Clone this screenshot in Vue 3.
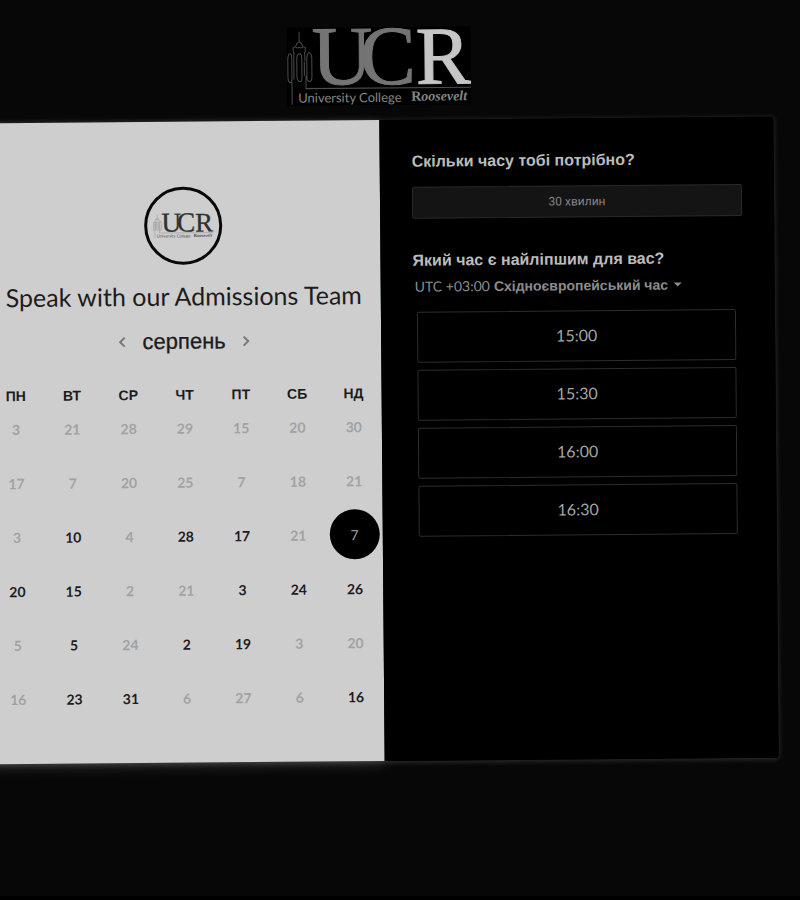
<script setup>
import { ref } from 'vue'

const weekdays = ['ПН', 'ВТ', 'СР', 'ЧТ', 'ПТ', 'СБ', 'НД']

const off = (n) => ({ n, open: false })
const on = (n) => ({ n, open: true })

const weeks = [
  [off(3), off(21), off(28), off(29), off(15), off(20), off(30)],
  [off(17), off(7), off(20), off(25), off(7), off(18), off(21)],
  [off(3), on(10), off(4), on(28), on(17), off(21), on(7)],
  [on(20), on(15), off(2), off(21), on(3), on(24), on(26)],
  [off(5), on(5), off(24), on(2), on(19), off(3), off(20)],
  [off(16), on(23), on(31), off(6), off(27), off(6), on(16)],
]

const slots = ['15:00', '15:30', '16:00', '16:30']
const selected = ref('2-6')
</script>

<template>
  <div class="page">
    <div class="sheet">
      <header class="header">
        <svg class="logo" viewBox="0 0 184 78" role="img" aria-label="University College Roosevelt">
          <symbol id="ucr" class="mark" viewBox="0 0 184 78">
            <g class="tower">
              <path d="M5 77V54M1 50V31Q1.500 26 3 26Q5 26 5 31V51Q5 55 3 55Q1 54 1 50ZM10 48V30Q10.500 26 12.500 26Q15 26 15 31V50Q15 54 12.500 54Q10 53 10 48ZM20 50V31Q20.500 25 22.500 25Q25 26 25 31V49Q25 54 22.500 54Q20 54 20 50ZM7 52V32M7 32V27Q8 25 6.500 24V20L9 19L10 16L12.500 14V4M12.500 14L15 16L16 19L18.500 20V24Q17 25 18 27V33M17.500 34V48M19 48V61H184M9 20H16" />
            </g>
            <text class="uc" x="25" y="57">U</text>
            <text class="uc" x="73" y="57">C</text>
            <text class="r" x="129" y="57">R</text>
            <text class="small" x="11" y="75">University College</text>
            <text class="name" x="124" y="74">R<tspan class="slant">oosevelt</tspan></text>
          </symbol>
          <use href="#ucr" width="184" height="78" />
        </svg>
      </header>

      <main class="card">
        <section class="calendar">
          <div class="avatar">
            <svg class="avatar-logo" viewBox="0 0 184 78" aria-hidden="true">
              <use href="#ucr" width="184" height="78" />
            </svg>
          </div>
          <h1 class="title">Speak with our Admissions Team</h1>
          <div class="month">
            <button class="arrow" type="button" aria-label="Попередній місяць">
              <svg viewBox="0 0 8 12"><path d="M6.500 1.500L2 6l4.500 4.500" /></svg>
            </button>
            <h2 class="month-name">серпень</h2>
            <button class="arrow" type="button" aria-label="Наступний місяць">
              <svg viewBox="0 0 8 12"><path d="M1.500 1.500L6 6l-4.500 4.500" /></svg>
            </button>
          </div>
          <table class="days">
            <thead>
              <tr>
                <th v-for="d in weekdays" :key="d" scope="col">{{ d }}</th>
              </tr>
            </thead>
            <tbody>
              <tr v-for="(week, w) in weeks" :key="w">
                <td v-for="(day, i) in week" :key="i">
                  <button
                    class="day"
                    :class="{ selected: selected === `${w}-${i}` }"
                    type="button"
                    :disabled="!day.open"
                    @click="selected = `${w}-${i}`"
                  >{{ day.n }}</button>
                </td>
              </tr>
            </tbody>
          </table>
        </section>

        <section class="times">
          <h2 class="question">Скільки часу тобі потрібно?</h2>
          <button class="duration" type="button">30 хвилин</button>
          <h2 class="question">Який час є найліпшим для вас?</h2>
          <button class="zone" type="button" aria-haspopup="listbox">
            <span class="offset">UTC +03:00</span>
            <span class="zone-name">Східноєвропейський час</span>
            <span class="caret"></span>
          </button>
          <ul class="slots">
            <li v-for="s in slots" :key="s">
              <button class="slot" type="button">{{ s }}</button>
            </li>
          </ul>
        </section>
      </main>
    </div>
  </div>
</template>

<style>
body {
  margin: 0;
  background: #000;
}
</style>

<style scoped>
.page {
  min-height: calc(100vh - 4px);
  overflow: hidden;
  background: #070707;
  font-family: Lato, "Liberation Sans", sans-serif;
}

.sheet {
  margin: 0 24px 0 -12px;
  transform: rotate(-0.48deg);
  transform-origin: 50% 441px;
}

.header {
  display: flex;
  justify-content: center;
  height: 93px;
  padding-top: 27px;
}

.logo {
  width: 184px;
  height: 78px;
  overflow: visible;
  background: #000;
  --uc: #747474;
  --r: #c6c6c6;
  --line: #4c4c4c;
  --small: #858585;
}

.mark {
  overflow: visible;
}

.tower path {
  fill: none;
  stroke: var(--line);
  stroke-width: 1;
}

.uc,
.r {
  font-family: "Liberation Serif", serif;
  font-size: 84px;
  stroke-width: 1;
}

.uc {
  fill: var(--uc);
  stroke: var(--uc);
}

.r {
  font-size: 82px;
  fill: var(--r);
  stroke: var(--r);
}

.small {
  font-family: Lato, sans-serif;
  font-size: 13px;
  fill: var(--small);
}

.name {
  font-family: "Liberation Serif", serif;
  font-size: 14px;
  font-weight: 700;
  fill: var(--small);
}

.slant {
  font-style: italic;
}

.card {
  display: grid;
  grid-template-columns: 1fr 1fr;
  border-radius: 3px;
  background: #000;
  box-shadow: 0 1px 5px 1px rgba(255, 255, 255, 0.14);
}

.calendar {
  display: flex;
  flex-direction: column;
  align-items: center;
  padding: 65px 0 38px;
  background: #cecece;
  color: #1c1c1c;
  box-shadow: 0 4px 14px rgba(255, 255, 255, 0.14);
}

.avatar {
  display: flex;
  align-items: center;
  justify-content: center;
  box-sizing: border-box;
  width: 78px;
  height: 78px;
  border: 3px solid #080808;
  border-radius: 50%;
}

.avatar-logo {
  width: 60px;
  height: 26px;
  overflow: visible;
  --uc: #303030;
  --r: #303030;
  --line: #707070;
  --small: #4a4a4a;
}

h1,
h2 {
  margin: 0;
}

.title {
  margin-top: 15px;
  font-size: 25px;
  line-height: 32px;
  font-weight: 400;
  white-space: nowrap;
}

.month {
  display: flex;
  align-items: center;
  gap: 16px;
  margin-top: 14px;
}

.month-name {
  font-family: "Liberation Sans", sans-serif;
  font-size: 22px;
  line-height: 32px;
  font-weight: 400;
  -webkit-text-stroke: 0.3px #1c1c1c;
}

button {
  margin: 0;
  padding: 0;
  border: 0;
  background: none;
  font: inherit;
  color: inherit;
  cursor: pointer;
}

.arrow {
  display: flex;
  width: 8px;
  height: 12px;
}

.arrow svg {
  width: 8px;
  height: 12px;
  fill: none;
  stroke: #777;
  stroke-width: 2;
}

.days {
  width: 100%;
  margin-top: 31px;
  border-collapse: collapse;
  table-layout: fixed;
}

th {
  height: 12px;
  padding: 0;
  font-family: "Liberation Sans", sans-serif;
  font-size: 14px;
  line-height: 12px;
  font-weight: 700;
}

td {
  height: 54px;
  padding: 0;
  text-align: center;
}

tbody {
  font-size: 14px;
}

.day {
  display: block;
  width: 50px;
  height: 50px;
  margin: 0 auto;
  border-radius: 50%;
  font-weight: 700;
}

.day:disabled {
  color: #a2a2a2;
  cursor: default;
}

.day.selected {
  background: #000;
  color: #aaa;
  font-weight: 400;
}

.times {
  position: relative;
  padding: 32px;
  border-radius: 0 3px 3px 0;
  background: #000;
  color: #bcbcbc;
}

.question {
  font-family: "Liberation Sans", sans-serif;
  font-size: 16px;
  line-height: 20px;
  font-weight: 700;
}

.duration {
  display: block;
  box-sizing: border-box;
  width: 100%;
  height: 32px;
  margin: 15px 0 32px;
  border: 1px solid #2a2a2a;
  border-radius: 2px;
  background: #141414;
  color: #858585;
  font-family: Roboto, sans-serif;
  font-size: 12px;
}

.zone {
  display: flex;
  align-items: center;
  gap: 4px;
  margin-top: 4px;
  padding-left: 2px;
  line-height: 24px;
  color: #8c8c8c;
}

.offset {
  font-size: 14px;
}

.zone-name {
  font-family: "Liberation Sans", sans-serif;
  font-size: 14px;
  font-weight: 700;
}

.caret {
  margin-left: 2px;
  border: 4px solid transparent;
  border-top-color: #8c8c8c;
  border-bottom: 0;
}

.slots {
  display: flex;
  flex-direction: column;
  gap: 7px;
  margin: 13px 7px 0 4px;
  padding: 0;
  list-style: none;
}

.slot {
  display: block;
  box-sizing: border-box;
  width: 100%;
  height: 51px;
  padding-bottom: 2px;
  border: 1px solid #2c2c2c;
  border-radius: 2px;
  color: #a6a6a6;
  font-size: 16px;
}
</style>
